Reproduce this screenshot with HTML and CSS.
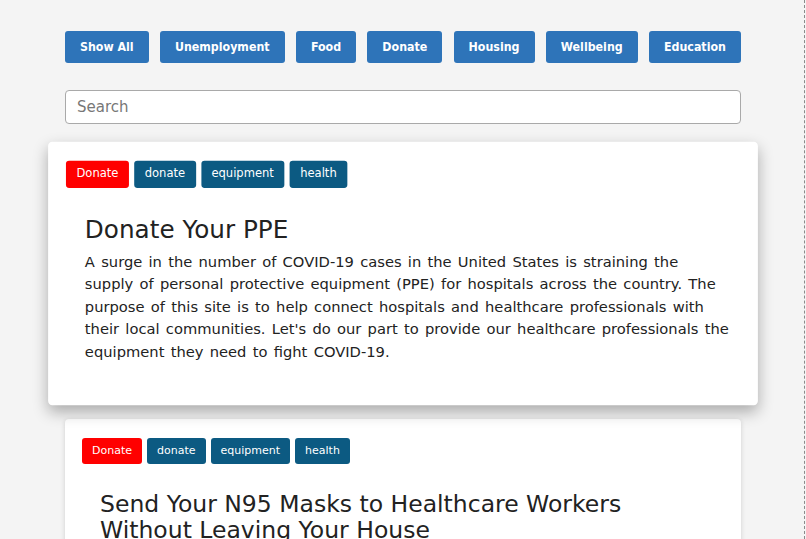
FILE: index.html
```html
<!DOCTYPE html>
<html>
<head>
<meta charset="utf-8">
<link rel="stylesheet" href="styles.css">
</head>
<body>
<div class="container">
  <div class="filters">
    <button class="filter">Show All</button>
    <button class="filter">Unemployment</button>
    <button class="filter">Food</button>
    <button class="filter">Donate</button>
    <button class="filter">Housing</button>
    <button class="filter">Wellbeing</button>
    <button class="filter">Education</button>
  </div>
  <input class="search" type="text" placeholder="Search">
  <div class="card card-hover">
    <div class="tags">
      <span class="tag tag-red">Donate</span>
      <span class="tag">donate</span>
      <span class="tag">equipment</span>
      <span class="tag">health</span>
    </div>
    <h2 class="title">Donate Your PPE</h2>
    <p class="text">A surge in the number of COVID-19 cases in the United States is straining the supply of personal protective equipment (PPE) for hospitals across the country. The purpose of this site is to help connect hospitals and healthcare professionals with their local communities. Let's do our part to provide our healthcare professionals the equipment they need to fight COVID-19.</p>
  </div>
  <div class="card">
    <div class="tags">
      <span class="tag tag-red">Donate</span>
      <span class="tag">donate</span>
      <span class="tag">equipment</span>
      <span class="tag">health</span>
    </div>
    <h2 class="title">Send Your N95 Masks to Healthcare Workers Without Leaving Your House</h2>
    <p class="text">Many healthcare workers are in need of N95 masks. Find out how you can send masks directly to the people who need them most without leaving your home.</p>
  </div>
</div>
<div class="window-edge"></div>
</body>
</html>
```

FILE: styles.css
```css
html, body {
  margin: 0;
  padding: 0;
  background: #f4f4f4;
  height: 100%;
  overflow: hidden;
}
body {
  font-family: "DejaVu Sans", Verdana, sans-serif;
  color: #222;
}
.container {
  width: 676px;
  margin: 0 auto;
  padding-top: 31px;
}
.filters {
  display: flex;
  justify-content: space-between;
}
.filter {
  height: 32px;
  padding: 0 15px;
  background: #2e74b9;
  color: #fff;
  border: none;
  border-radius: 3px;
  font-family: "DejaVu Sans Condensed", "DejaVu Sans", sans-serif;
  font-stretch: condensed;
  font-size: 12.3px;
  font-weight: bold;
  white-space: nowrap;
}
.search {
  display: block;
  box-sizing: border-box;
  width: 100%;
  height: 34px;
  margin-top: 27px;
  padding: 0 11px;
  border: 1px solid #a9a9a9;
  border-radius: 4px;
  background: #fff;
  font-family: "DejaVu Sans", Verdana, sans-serif;
  font-size: 15px;
  outline: none;
}
.search::placeholder {
  color: #777;
}
.card {
  background: #fff;
  border-radius: 4px;
  padding: 19px 27px 24px 17px;
  margin-top: 20px;
  box-shadow: 0 1px 5px rgba(0,0,0,0.15);
}
.card-hover {
  margin-top: 24px;
  height: 209px;
  padding-top: 18px;
  transform: scale(1.05);
  box-shadow: 0 6px 14px rgba(0,0,0,0.3);
}
.tags {
  display: flex;
  gap: 5px;
}
.tag {
  display: inline-block;
  height: 26px;
  line-height: 26px;
  padding: 0 10px;
  background: #0c5a82;
  color: #fff;
  border-radius: 3px;
  font-size: 11px;
}
.tag-red {
  background: #ff0000;
}
.title {
  margin: 27px 0 7px 18px;
  font-size: 23.5px;
  font-weight: normal;
  line-height: 26px;
  color: #222;
}
.text {
  margin: 0 0 0 18px;
  font-size: 14px;
  word-spacing: 1.5px;
  line-height: 21.4px;
  color: #222;
}
.window-edge {
  position: fixed;
  top: 0;
  right: 1px;
  width: 0;
  height: 100%;
  border-right: 1px dashed #8a8a8a;
}
```
